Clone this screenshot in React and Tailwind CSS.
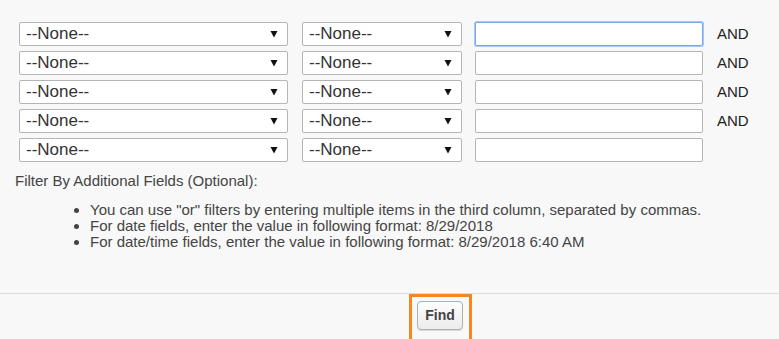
import React from "react";

function Caret() {
  return (
    <svg width="8" height="8" viewBox="0 0 8 8" className="shrink-0">
      <path d="M0.5 1 L7.5 1 L4 7.5 Z" fill="#111" />
    </svg>
  );
}

function Select({ width }) {
  return (
    <div
      className={`${width} h-[24px] flex items-center justify-between bg-white border border-[#b5b5b5] rounded-[2px] pl-[6px] pr-[9px] text-[17px] text-[#333]`}
    >
      <span>--None--</span>
      <Caret />
    </div>
  );
}

function App() {
  const rows = [true, true, true, true, false];

  return (
    <div className="w-[779px] h-[339px] bg-[#f8f8f8] font-['Liberation_Sans',Arial,sans-serif] text-[#333] flex flex-col overflow-hidden">
      <div className="h-[293px] shrink-0 pt-[22px] flex flex-col">
        <div className="flex flex-col gap-[5px] pl-[19px]">
          {rows.map((and, i) => (
            <div key={i} className="flex items-center h-[24px]">
              <Select width="w-[269px]" />
              <div className="w-[14px]" />
              <Select width="w-[160px]" />
              <div className="w-[13px]" />
              <div
                className={`w-[228px] h-[24px] bg-white rounded-[2px] border ${
                  i === 0 ? "border-[#7aa7f0] shadow-[0_0_0_1px_#a9c6f7]" : "border-[#b5b5b5]"
                }`}
              />
              {and && <span className="ml-[14px] text-[15px] text-[#222]">AND</span>}
            </div>
          ))}
        </div>
        <div className="pl-[15px] mt-[11px] text-[15px] leading-[16px] text-[#444]">
          Filter By Additional Fields (Optional):
        </div>
        <ul className="mt-[13px] pl-[90px] list-disc text-[15px] leading-[16px] text-[#444]">
          <li>You can use "or" filters by entering multiple items in the third column, separated by commas.</li>
          <li>For date fields, enter the value in following format: 8/29/2018</li>
          <li>For date/time fields, enter the value in following format: 8/29/2018 6:40 AM</li>
        </ul>
      </div>
      <div className="flex-1 border-t border-[#dcdcdc] flex">
        <div className="ml-[409px] border-[3px] border-[#f7861f] pl-[5px] pr-[6px] pt-[4px] pb-[10px] h-fit">
          <button className="w-[46px] h-[29px] rounded-[4px] border border-[#b0b0b0] bg-gradient-to-b from-[#fdfdfd] to-[#ececec] text-[14px] font-bold text-[#444] shadow-[0_1px_0_#d8d8d8]">
            Find
          </button>
        </div>
      </div>
    </div>
  );
}

export default App;
